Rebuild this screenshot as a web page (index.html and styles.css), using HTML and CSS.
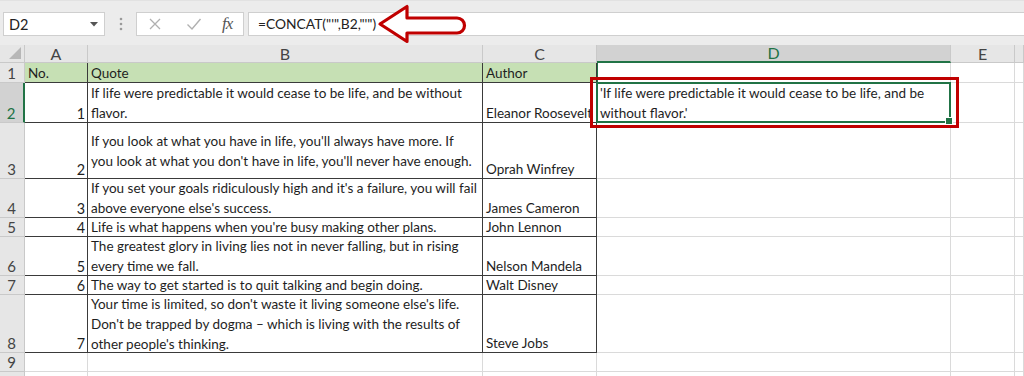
FILE: index.html
```html
<!DOCTYPE html>
<html>
<head>
<meta charset="utf-8">
<link rel="stylesheet" href="styles.css">
</head>
<body>
<div class="app">
  <div class="toolbar">
    <div class="namebox">
      <span class="nb-text">D2</span>
      <svg class="nb-caret" width="8" height="5" viewBox="0 0 8 5"><path d="M0 0 H8 L4 4.5 Z" fill="#555"/></svg>
    </div>
    <div class="dots">
      <svg width="4" height="14" viewBox="0 0 4 14"><circle cx="2" cy="2" r="1.3" fill="#9a9a9a"/><circle cx="2" cy="7" r="1.3" fill="#9a9a9a"/><circle cx="2" cy="12" r="1.3" fill="#9a9a9a"/></svg>
    </div>
    <div class="fnbtns">
      <svg class="fn-x" width="14" height="14" viewBox="0 0 14 14"><path d="M2 2 L12 12 M12 2 L2 12" stroke="#b0b0b0" stroke-width="1.3" fill="none"/></svg>
      <svg class="fn-check" width="16" height="14" viewBox="0 0 16 14"><path d="M1.5 7.5 L6 12 L14.5 2" stroke="#b0b0b0" stroke-width="1.4" fill="none"/></svg>
      <span class="fn-fx">fx</span>
    </div>
    <div class="formula">=CONCAT("'",B2,"'")</div>
    <svg class="arrow" width="100" height="44" viewBox="0 0 100 44">
      <path d="M6 23 L33 5.5 L33 17 L83 17 A7.5 7.5 0 0 1 83 32 L33 32 L33 40.5 Z" fill="#fff" stroke="#c00000" stroke-width="3.2" stroke-linejoin="round"/>
    </svg>
  </div>
  <div class="sheet">
    <div class="hd corner"><svg width="12" height="12" viewBox="0 0 12 12"><path d="M12 0 V12 H0 Z" fill="#b7b7b7"/></svg></div>
    <div class="hd col">A</div>
    <div class="hd col">B</div>
    <div class="hd col">C</div>
    <div class="hd col sel-col">D</div>
    <div class="hd col">E</div>
    <div class="hd col"></div>

    <div class="hd rowh">1</div>
    <div class="c t g l">No.</div>
    <div class="c t g l">Quote</div>
    <div class="c t g l clip">Author</div>
    <div class="c d1"></div>
    <div class="c"></div>
    <div class="c"></div>

    <div class="hd rowh sel-row">2</div>
    <div class="c t r">1</div>
    <div class="c t l mid">If life were predictable it would cease to be life, and be without<br>flavor.</div>
    <div class="c t l clip">Eleanor Roosevelt</div>
    <div class="c l mid d2">'If life were predictable it would cease to be life, and be<br>without flavor.'</div>
    <div class="c"></div>
    <div class="c"></div>

    <div class="hd rowh">3</div>
    <div class="c t r">2</div>
    <div class="c t l mid">If you look at what you have in life, you'll always have more. If<br>you look at what you don't have in life, you'll never have enough.</div>
    <div class="c t l clip">Oprah Winfrey</div>
    <div class="c"></div>
    <div class="c"></div>
    <div class="c"></div>

    <div class="hd rowh">4</div>
    <div class="c t r">3</div>
    <div class="c t l mid">If you set your goals ridiculously high and it's a failure, you will fail<br>above everyone else's success.</div>
    <div class="c t l clip">James Cameron</div>
    <div class="c"></div>
    <div class="c"></div>
    <div class="c"></div>

    <div class="hd rowh">5</div>
    <div class="c t r">4</div>
    <div class="c t l mid">Life is what happens when you're busy making other plans.</div>
    <div class="c t l clip">John Lennon</div>
    <div class="c"></div>
    <div class="c"></div>
    <div class="c"></div>

    <div class="hd rowh">6</div>
    <div class="c t r">5</div>
    <div class="c t l mid">The greatest glory in living lies not in never falling, but in rising<br>every time we fall.</div>
    <div class="c t l clip">Nelson Mandela</div>
    <div class="c"></div>
    <div class="c"></div>
    <div class="c"></div>

    <div class="hd rowh">7</div>
    <div class="c t r">6</div>
    <div class="c t l mid">The way to get started is to quit talking and begin doing.</div>
    <div class="c t l clip">Walt Disney</div>
    <div class="c"></div>
    <div class="c"></div>
    <div class="c"></div>

    <div class="hd rowh">8</div>
    <div class="c t r">7</div>
    <div class="c t l mid">Your time is limited, so don't waste it living someone else's life.<br>Don't be trapped by dogma – which is living with the results of<br>other people's thinking.</div>
    <div class="c t l clip">Steve Jobs</div>
    <div class="c"></div>
    <div class="c"></div>
    <div class="c"></div>

    <div class="hd rowh">9</div>
    <div class="c"></div>
    <div class="c"></div>
    <div class="c"></div>
    <div class="c"></div>
    <div class="c"></div>
    <div class="c"></div>

    <div class="hd rowh"></div>
    <div class="c"></div>
    <div class="c"></div>
    <div class="c"></div>
    <div class="c"></div>
    <div class="c"></div>
    <div class="c"></div>
  </div>
  <div class="redbox"></div>
</div>
</body>
</html>
```
FILE: styles.css
```css
* { box-sizing: border-box; }
html, body { margin: 0; padding: 0; }
body {
  width: 1024px;
  height: 376px;
  overflow: hidden;
  background: #fff;
  font-family: Lato, "Liberation Sans", sans-serif;
  color: #1e1e1e;
}
.app { position: relative; width: 1024px; height: 376px; overflow: hidden; }

.toolbar {
  position: relative;
  height: 45px;
  background: #ececec;
  display: flex;
  align-items: flex-start;
  padding-top: 11px;
  border-top: 1px solid #e2e2e2;
}
.namebox {
  margin-left: 3px;
  width: 102px;
  height: 24px;
  background: #fff;
  border: 1px solid #cfcfcf;
  display: flex;
  align-items: center;
  justify-content: space-between;
  padding: 0 6px 0 5px;
}
.nb-text { font-size: 14.5px; color: #222; }
.dots { width: 31px; height: 24px; display: flex; align-items: center; justify-content: center; }
.fnbtns {
  width: 108px;
  height: 24px;
  background: #fff;
  border: 1px solid #cfcfcf;
  display: flex;
  align-items: center;
  padding-left: 11px;
}
.fn-x { margin-right: 24px; }
.fn-check { margin-right: 20px; }
.fn-fx {
  font-family: "Liberation Serif", serif;
  font-style: italic;
  font-size: 17px;
  color: #555;
  letter-spacing: -1px;
}
.formula {
  margin-left: 4px;
  flex: 1;
  height: 24px;
  background: #fff;
  border: 1px solid #cfcfcf;
  border-right: none;
  font-size: 13.8px;
  line-height: 22px;
  padding-left: 9px;
  color: #222;
}
.arrow { position: absolute; left: 374px; top: 0; }

.sheet {
  display: grid;
  grid-template-columns: 25px 63px 395px 114px 354px 64px 1fr;
  grid-template-rows: 18px 20px 40px 56px 39px 19px 39px 19px 58px 19px 20px;
  font-size: 13.5px;
}
.hd {
  background: #e6e6e6;
  color: #444;
  border-right: 1px solid #c9c9c9;
  border-bottom: 1px solid #c9c9c9;
  display: flex;
  justify-content: center;
}
.col { align-items: center; font-size: 16px; line-height: 18px; }
.corner { justify-content: flex-end; align-items: flex-end; padding: 0 3px 3px 0; }
.rowh { align-items: flex-end; line-height: 17px; font-size: 15px; padding-right: 1px; }
.sel-col { background: #d2d2d2; color: #217346; border-bottom: 2px solid #217346; }
.sel-row { background: #d2d2d2; color: #217346; border-right: 2px solid #217346; }

.c {
  border-right: 1px solid #dadada;
  border-bottom: 1px solid #dadada;
  display: flex;
  align-items: flex-end;
  white-space: nowrap;
  line-height: 17px;
  padding: 0 2px 0 3px;
  overflow: visible;
}
.c.t { border-right-color: #3a3a3a; border-bottom-color: #3a3a3a; }
.c.g { background: #c6e0b4; }
.c.r { justify-content: flex-end; font-size: 14.4px; }
.c.l { justify-content: flex-start; }
.c.mid { align-items: center; line-height: 20px; }
.c.clip { overflow: hidden; }
.d1 { border-left: 1px solid #217346; }
.d2 {
  position: relative;
  border: 2px solid #217346;
  margin: -1px 0 0 -1px;
  padding-left: 2px;
}
.d2::after {
  content: "";
  position: absolute;
  right: -4px;
  bottom: -4px;
  width: 6px;
  height: 6px;
  background: #217346;
  border: 1px solid #fff;
}
.redbox {
  position: absolute;
  left: 590px;
  top: 77px;
  width: 369px;
  height: 51px;
  border: 3px solid #c00000;
  pointer-events: none;
}
```
